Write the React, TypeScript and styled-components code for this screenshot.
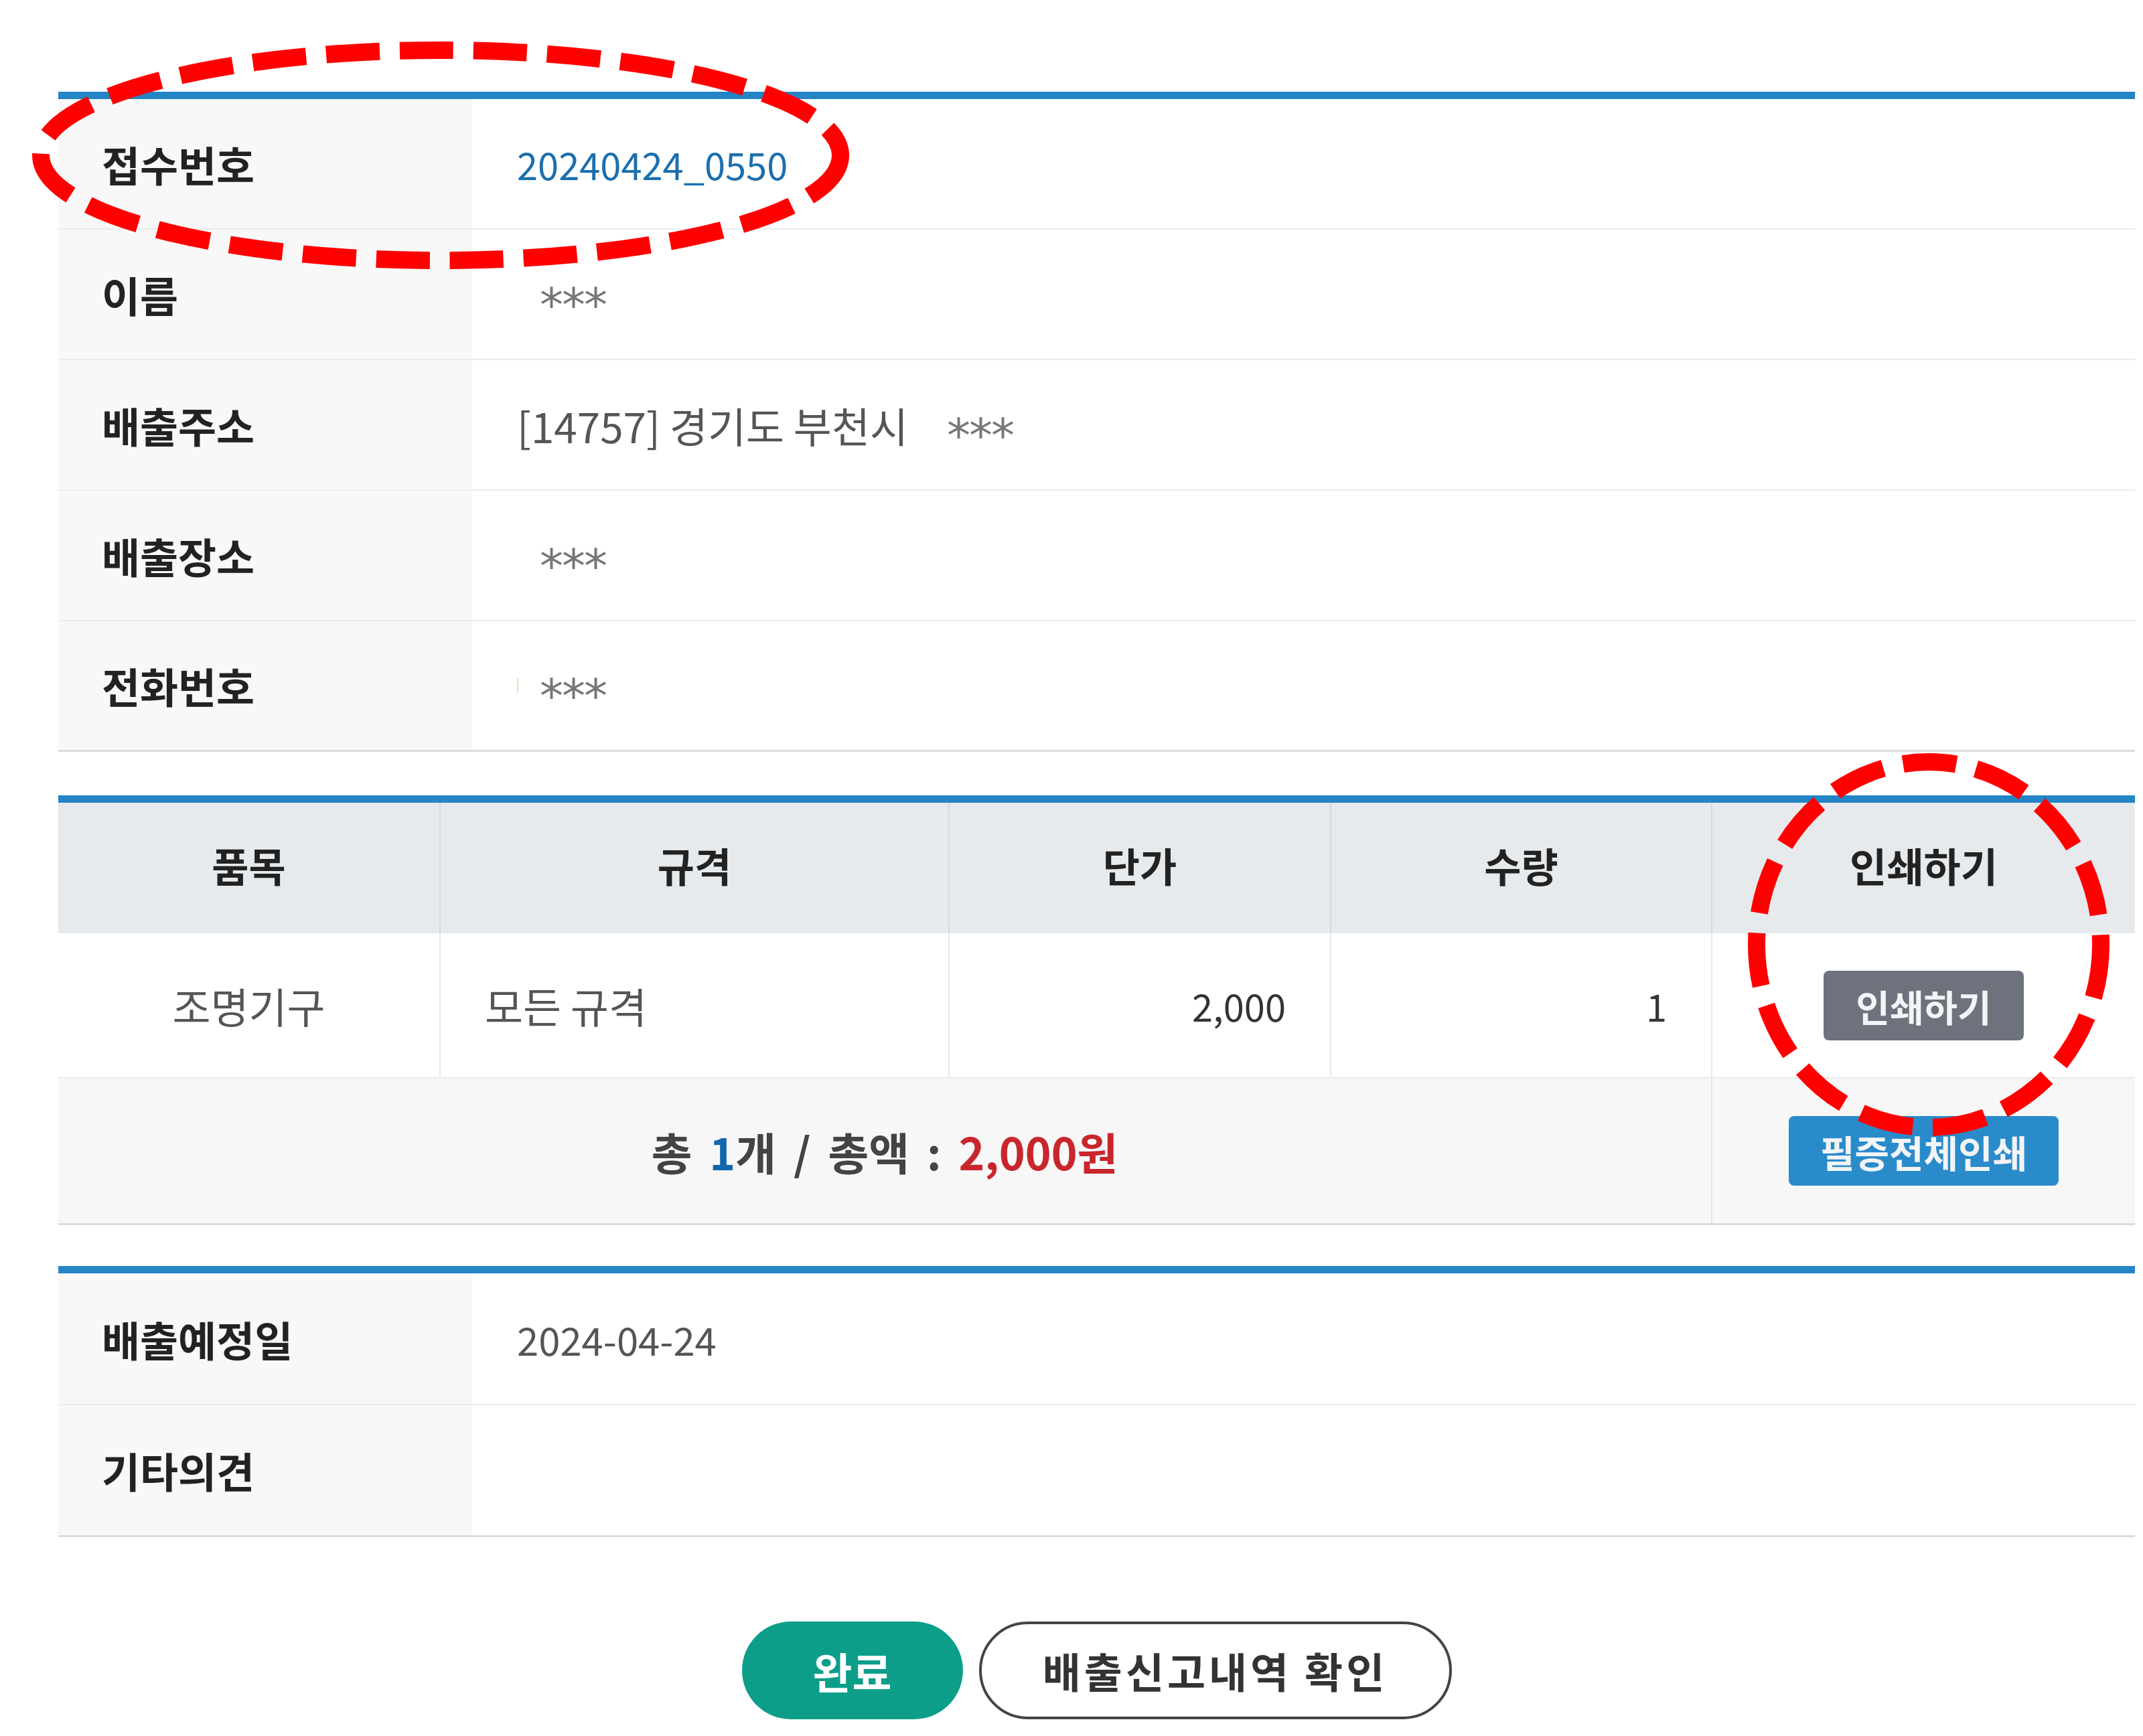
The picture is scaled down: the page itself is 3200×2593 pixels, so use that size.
import React from 'react';
import styled, { createGlobalStyle } from 'styled-components';

const BLUE = '#2385c6';

const GlobalStyle = createGlobalStyle`
  html, body {
    margin: 0;
    padding: 0;
    background: #fff;
  }
  body {
    font-family: "Noto Sans CJK KR", "Noto Sans", sans-serif;
    color: #333;
  }
  * { box-sizing: border-box; }
`;

const Page = styled.div`
  position: relative;
  width: 3200px;
  height: 2593px;
  padding: 137px 12px 0 87px;
  overflow: hidden;
`;

const InfoTable = styled.div<{ $gap?: number }>`
  border-top: 11px solid ${BLUE};
  margin-bottom: ${p => p.$gap ?? 0}px;
`;

const InfoRow = styled.div<{ $last?: boolean; $h?: number }>`
  display: grid;
  grid-template-columns: 618px 1fr;
  height: ${p => p.$h ?? 195}px;
  border-bottom: ${p => (p.$last ? '3px solid #dcdcdc' : '2px solid #ebebeb')};
`;

const Label = styled.div`
  display: flex;
  align-items: center;
  padding-left: 65px;
  background: #f8f8f8;
  font-size: 62px;
  font-weight: 700;
  color: #222;
`;

const Value = styled.div<{ $link?: boolean; $size?: number }>`
  display: flex;
  align-items: center;
  padding-left: 67px;
  font-size: ${p => p.$size ?? 62}px;
  color: ${p => (p.$link ? '#1b6fae' : '#555')};
  white-space: pre;
`;

const Masked = styled.span<{ $indent?: number }>`
  display: inline-block;
  margin-left: ${p => p.$indent ?? 0}px;
  font-family: "DejaVu Sans", sans-serif;
  font-size: 70px;
  letter-spacing: -2px;
  color: #777;
  transform: translateY(16px);
`;

const Caret = styled.span`
  display: inline-block;
  width: 2px;
  height: 22px;
  background: #f3dfb4;
  margin-right: 4px;
`;

const ItemTable = styled.div`
  border-top: 11px solid ${BLUE};
  margin-bottom: 61px;
`;

const ItemGrid = styled.div`
  display: grid;
  grid-template-columns: 569px 760px 570px 569px 1fr;
`;

const HeadCell = styled.div`
  height: 195px;
  display: flex;
  align-items: center;
  justify-content: center;
  padding-bottom: 10px;
  background: #e6eaed;
  font-size: 60px;
  font-weight: 700;
  color: #222;
  & + & {
    border-left: 2px solid #d3d9dc;
  }
`;

const BodyCell = styled.div<{ $align?: 'left' | 'center' | 'right'; $first?: boolean }>`
  height: 217px;
  display: flex;
  align-items: center;
  justify-content: ${p =>
    p.$align === 'left' ? 'flex-start' : p.$align === 'right' ? 'flex-end' : 'center'};
  padding: 0 ${p => (p.$align === 'right' ? 66 : 0)}px 0 ${p => (p.$align === 'left' ? 66 : 0)}px;
  border-bottom: 2px solid #e8e8e8;
  border-left: ${p => (p.$first ? 'none' : '2px solid #e6eaec')};
  font-size: 62px;
  color: #555;
`;

const Num = styled.span`
  font-size: 56px;
  color: #333;
`;

const TotalRow = styled.div`
  display: grid;
  grid-template-columns: 2468px 1fr;
  height: 219px;
  background: #f7f7f7;
  border-bottom: 3px solid #dcdcdc;
`;

const TotalText = styled.div`
  display: flex;
  align-items: center;
  justify-content: center;
  font-size: 66px;
  font-weight: 700;
  word-spacing: 11px;
  color: #444;
  white-space: pre;
`;

const Count = styled.span`
  color: #1167ad;
`;

const Amount = styled.span`
  color: #c8262c;
`;

const TotalAction = styled.div`
  display: flex;
  align-items: center;
  justify-content: center;
  border-left: 2px solid #e6e6e6;
`;

const SmallButton = styled.button<{ $tone: 'gray' | 'blue' }>`
  display: inline-flex;
  align-items: center;
  justify-content: center;
  height: 104px;
  width: ${p => (p.$tone === 'gray' ? 299 : 403)}px;
  border: none;
  border-radius: 8px;
  background: ${p => (p.$tone === 'gray' ? '#6d727d' : '#2a8bcb')};
  color: #f2f4f6;
  font-family: "Noto Sans CJK KR", sans-serif;
  font-size: ${p => (p.$tone === 'gray' ? 55 : 56)}px;
  font-weight: 700;
  padding: 0;
`;

const Actions = styled.div`
  display: flex;
  justify-content: center;
  gap: 24px;
  margin-top: 126px;
`;

const PillButton = styled.button<{ $primary?: boolean }>`
  display: inline-flex;
  align-items: center;
  justify-content: center;
  height: 146px;
  width: ${p => (p.$primary ? 330 : 706)}px;
  border-radius: 73px;
  border: ${p => (p.$primary ? 'none' : '4px solid #444')};
  background: ${p => (p.$primary ? '#0d9e8a' : '#fff')};
  color: ${p => (p.$primary ? '#fff' : '#333')};
  font-family: "Noto Sans CJK KR", sans-serif;
  font-size: ${p => (p.$primary ? 64 : 62)}px;
  font-weight: 700;
  letter-spacing: ${p => (p.$primary ? 0 : 5)}px;
  padding: 0;
`;

const Marks = styled.svg`
  position: absolute;
  left: 0;
  top: 0;
  pointer-events: none;
`;

const info = [
  { label: '이름', masked: true },
  { label: '배출주소', address: true },
  { label: '배출장소', masked: true },
  { label: '전화번호', masked: true, caret: true },
];

export default function App() {
  return (
    <>
      <GlobalStyle />
      <Page>
        <InfoTable $gap={65}>
          <InfoRow>
            <Label>접수번호</Label>
            <Value $link $size={56}>20240424_0550</Value>
          </InfoRow>
          {info.map((row, i) => (
            <InfoRow key={row.label} $last={i === info.length - 1}>
              <Label>{row.label}</Label>
              <Value>
                {row.address ? (
                  <>
                    [14757] 경기도 부천시
                    <Masked $indent={58}>***</Masked>
                  </>
                ) : (
                  <>
                    {row.caret && <Caret />}
                    <Masked $indent={row.caret ? 28 : 34}>***</Masked>
                  </>
                )}
              </Value>
            </InfoRow>
          ))}
        </InfoTable>

        <ItemTable>
          <ItemGrid>
            <HeadCell>품목</HeadCell>
            <HeadCell>규격</HeadCell>
            <HeadCell>단가</HeadCell>
            <HeadCell>수량</HeadCell>
            <HeadCell>인쇄하기</HeadCell>
            <BodyCell $first>조명기구</BodyCell>
            <BodyCell $align="left">모든 규격</BodyCell>
            <BodyCell $align="right"><Num>2,000</Num></BodyCell>
            <BodyCell $align="right"><Num>1</Num></BodyCell>
            <BodyCell>
              <SmallButton $tone="gray">인쇄하기</SmallButton>
            </BodyCell>
          </ItemGrid>
          <TotalRow>
            <TotalText>
              총 <Count>1</Count>개 / 총액 : <Amount>2,000원</Amount>
            </TotalText>
            <TotalAction>
              <SmallButton $tone="blue">필증전체인쇄</SmallButton>
            </TotalAction>
          </TotalRow>
        </ItemTable>

        <InfoTable>
          <InfoRow $h={197}>
            <Label>배출예정일</Label>
            <Value $size={58}>2024-04-24</Value>
          </InfoRow>
          <InfoRow $h={197} $last>
            <Label>기타의견</Label>
            <Value />
          </InfoRow>
        </InfoTable>

        <Actions>
          <PillButton $primary>완료</PillButton>
          <PillButton>배출신고내역 확인</PillButton>
        </Actions>

        <Marks width={3200} height={2593} viewBox="0 0 3200 2593">
          <ellipse
            cx={658}
            cy={232}
            rx={597}
            ry={157}
            fill="none"
            stroke="#ff0000"
            strokeWidth={26}
            strokeDasharray="80 30"
          />
          <ellipse
            cx={2880}
            cy={1411}
            rx={257}
            ry={273}
            fill="none"
            stroke="#ff0000"
            strokeWidth={26}
            strokeDasharray="80 30"
          />
        </Marks>
      </Page>
    </>
  );
}
